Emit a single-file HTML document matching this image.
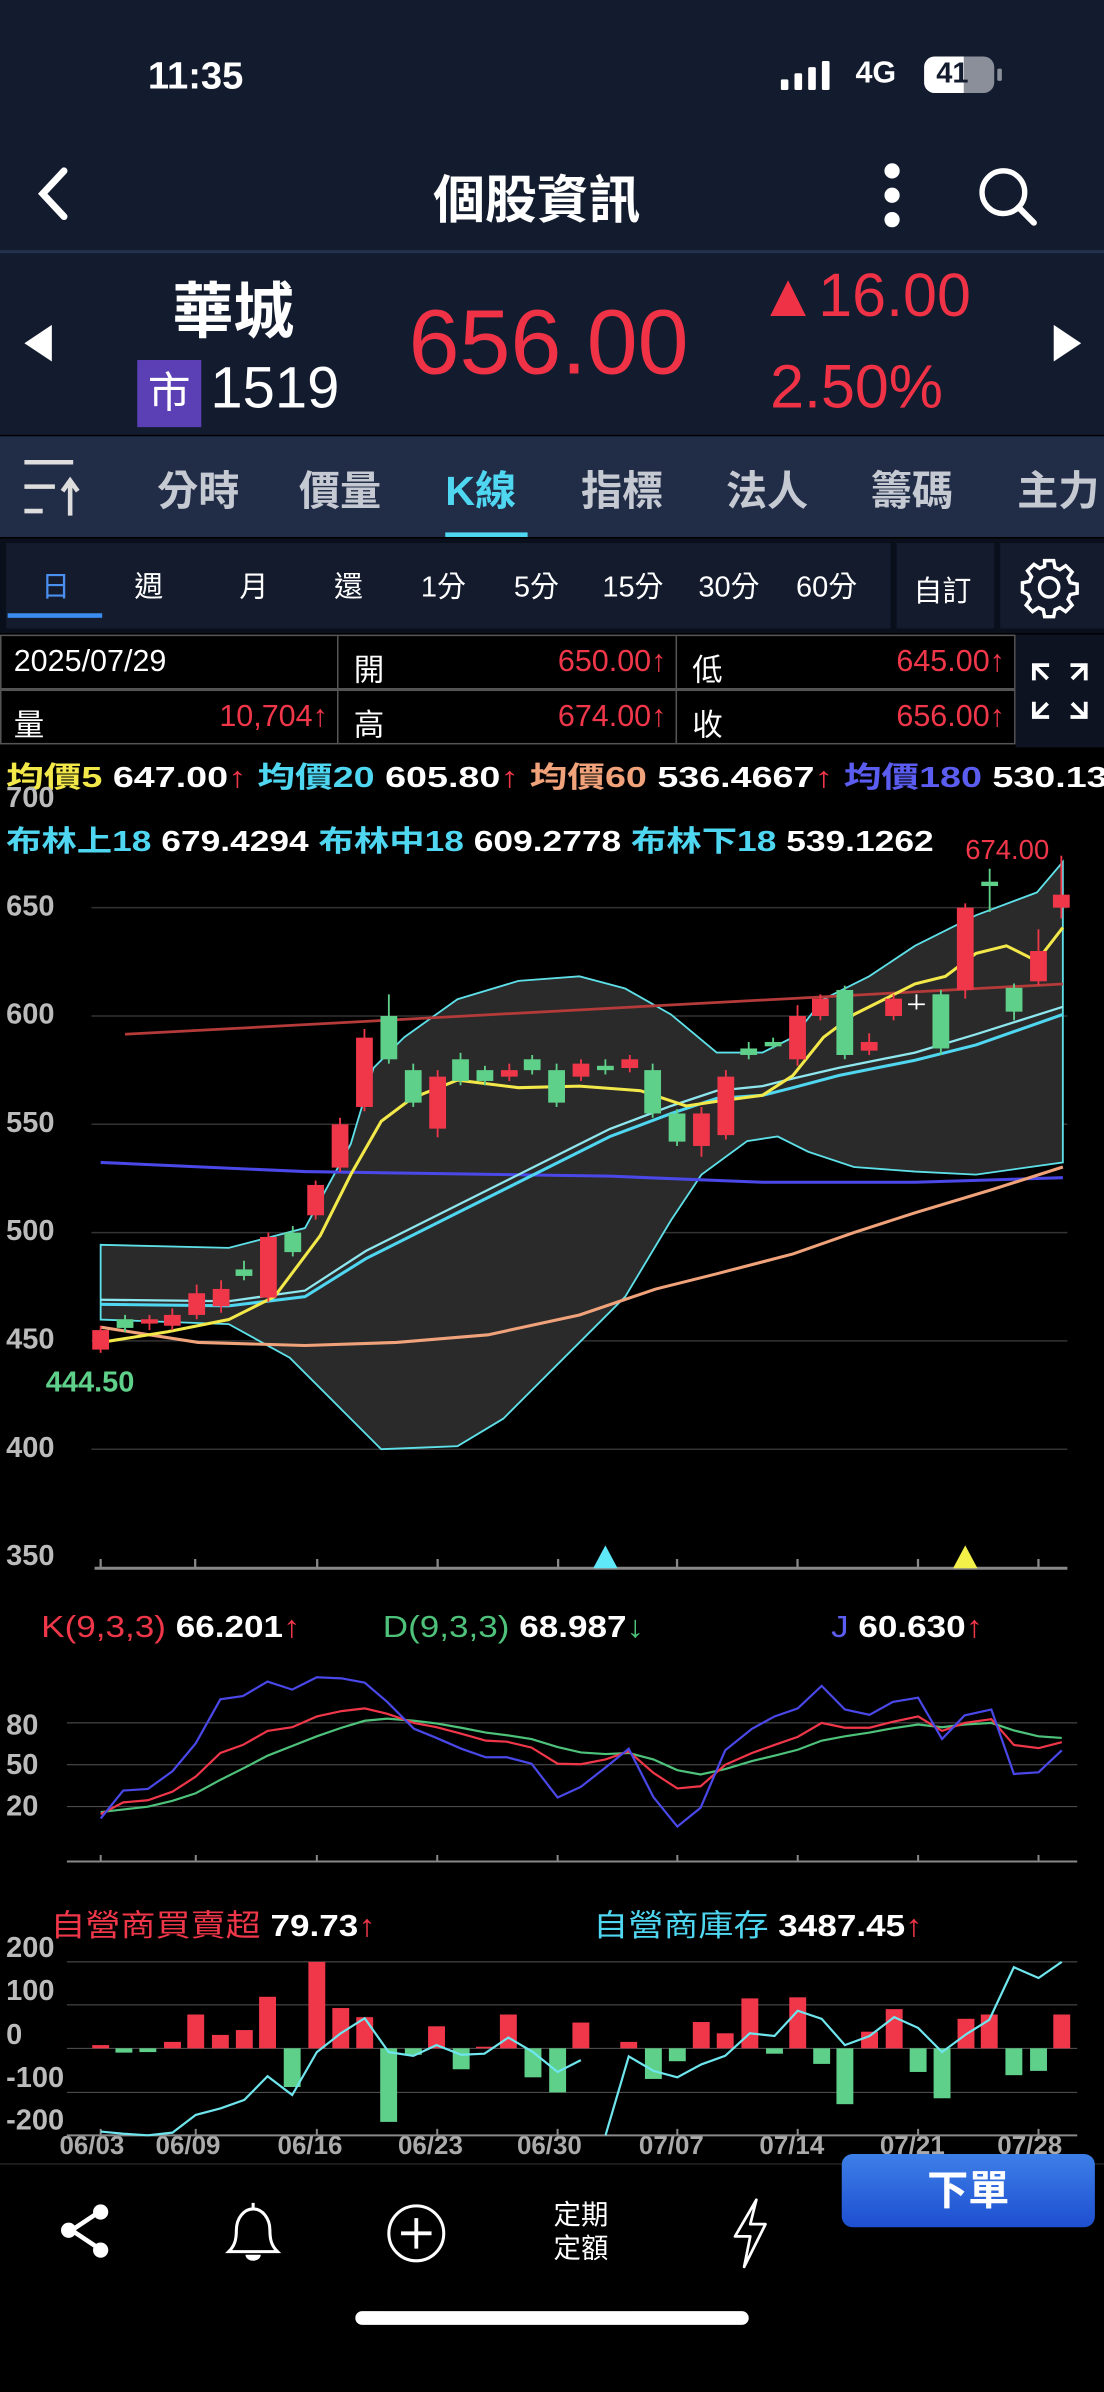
<!DOCTYPE html>
<html><head><meta charset="utf-8"><style>
*{margin:0;padding:0;box-sizing:border-box}
body{width:1104px;height:2392px;background:#000;overflow:hidden;font-family:"Liberation Sans","Noto Sans CJK TC",sans-serif;color:#fff;position:relative}
#w{position:absolute;left:0;top:0;width:724px;height:1568px;transform:scale(1.5249,1.5255);transform-origin:0 0}
.a{position:absolute;white-space:nowrap}
.b{font-weight:bold}
.tab{position:absolute;top:300px;font-size:27px;color:#c5c9d2;font-weight:bold}
.per{position:absolute;top:370px;font-size:19px;color:#fff}
.cell{position:absolute;height:36px;border:1px solid #555;background:#000;font-size:20px}
.red{color:#f0374a}
.yl{font-size:19px;color:#bbb;font-weight:bold;position:absolute;left:4px}
.sx{transform-origin:0 0}
</style></head><body>
<div id="w">
<div class="a" style="left:0;top:0;width:724px;height:285px;background:#131b2e"></div>
<div class="a b" style="left:97px;top:36px;font-size:25px">11:35</div>
<svg class="a" style="left:512px;top:40px" width="40" height="20"><rect x="0" y="12" width="5" height="7" rx="1" fill="#fff"/><rect x="9" y="8" width="5" height="11" rx="1" fill="#fff"/><rect x="18" y="4" width="5" height="15" rx="1" fill="#fff"/><rect x="27" y="0" width="5" height="19" rx="1" fill="#fff"/></svg>
<div class="a b" style="left:561px;top:37px;font-size:20px">4G</div>
<div class="a" style="left:606px;top:37px;width:46px;height:24px;border-radius:7px;background:#8a8f99;overflow:hidden"><div style="width:26px;height:24px;background:#fff"></div><div class="a b" style="left:8px;top:1px;font-size:19px;color:#131b2e">41</div></div>
<div class="a" style="left:654px;top:45px;width:3px;height:8px;background:#8a8f99;border-radius:1px"></div>
<svg class="a" style="left:20px;top:108px" width="28" height="38"><path d="M22 4 L8 19 L22 34" stroke="#fff" stroke-width="4.5" fill="none" stroke-linecap="round"/></svg>
<div class="a b" style="left:284px;top:104px;font-size:34px">個股資訊</div>
<svg class="a" style="left:575px;top:106px" width="20" height="44"><circle cx="10" cy="6" r="5" fill="#fff"/><circle cx="10" cy="22" r="5" fill="#fff"/><circle cx="10" cy="38" r="5" fill="#fff"/></svg>
<svg class="a" style="left:640px;top:108px" width="42" height="42"><circle cx="18" cy="18" r="14" stroke="#fff" stroke-width="3.5" fill="none"/><path d="M28 28 L38 38" stroke="#fff" stroke-width="4" stroke-linecap="round"/></svg>
<div class="a" style="left:0;top:164px;width:724px;height:2px;background:#22324d"></div>
<svg class="a" style="left:14px;top:212px" width="24" height="26"><path d="M20 1 L20 25 L2 13Z" fill="#fff"/></svg>
<svg class="a" style="left:688px;top:212px" width="24" height="26"><path d="M3 1 L3 25 L21 13Z" fill="#fff"/></svg>
<div class="a b" style="left:113px;top:172px;font-size:40px">華城</div>
<div class="a" style="left:90px;top:236px;width:42px;height:44px;background:#5b3fb5;font-size:28px;text-align:center;line-height:44px">市</div>
<div class="a" style="left:138px;top:234px;font-size:38px">1519</div>
<div class="a" style="left:268px;top:190px;font-size:60px;color:#ef3245">656.00</div>
<div class="a" style="left:497px;top:172px;font-size:40px;color:#ef3245">▲16.00</div>
<div class="a" style="left:505px;top:232px;font-size:40px;color:#ef3245">2.50%</div>
<div class="a" style="left:0;top:286px;width:724px;height:66px;background:#212c47"></div>
<svg class="a" style="left:14px;top:300px" width="40" height="40"><path d="M2 3 H34 M2 19 H22 M2 35 H14" stroke="#ddd" stroke-width="3"/><path d="M32 38 V16 M27 22 L32 15 L37 22" stroke="#ddd" stroke-width="3" fill="none"/></svg>
<div class="tab" style="left:103px">分時</div><div class="tab" style="left:196px">價量</div>
<div class="tab" style="left:292px;color:#4fd6f0">K線</div><div class="tab" style="left:381px">指標</div>
<div class="tab" style="left:476px">法人</div><div class="tab" style="left:571px">籌碼</div><div class="tab" style="left:667px">主力</div>
<div class="a" style="left:292px;top:349px;width:54px;height:3px;background:#4fd6f0"></div>
<div class="a" style="left:0;top:353px;width:724px;height:62px;background:#0a0f1c"></div>
<div class="a" style="left:4px;top:356px;width:580px;height:56px;background:#131b2d"></div>
<div class="a" style="left:588px;top:356px;width:64px;height:56px;background:#131b2d"></div>
<div class="a" style="left:656px;top:356px;width:68px;height:56px;background:#131b2d"></div>
<div class="per" style="left:27px;color:#4b8ff0">日</div><div class="per" style="left:88px">週</div><div class="per" style="left:157px">月</div><div class="per" style="left:219px">還</div>
<div class="per" style="left:276px">1分</div><div class="per" style="left:337px">5分</div><div class="per" style="left:395px">15分</div><div class="per" style="left:458px">30分</div><div class="per" style="left:522px">60分</div>
<div class="per" style="left:599px;top:373px">自訂</div>
<div class="a" style="left:5px;top:402px;width:62px;height:3px;background:#3b8cf0"></div>
<svg class="a" style="left:667px;top:364px" width="42" height="42" viewBox="0 0 24 24"><path d="M10.3 2h3.4l.5 2.6 1.8.8 2.2-1.5 2.4 2.4-1.5 2.2.8 1.8 2.6.5v3.4l-2.6.5-.8 1.8 1.5 2.2-2.4 2.4-2.2-1.5-1.8.8-.5 2.6h-3.4l-.5-2.6-1.8-.8-2.2 1.5-2.4-2.4 1.5-2.2-.8-1.8L2 13.7v-3.4l2.6-.5.8-1.8-1.5-2.2 2.4-2.4 2.2 1.5 1.8-.8z" fill="none" stroke="#fff" stroke-width="1.3"/><circle cx="12" cy="12" r="3.6" fill="none" stroke="#fff" stroke-width="1.3"/></svg>
<div class="cell" style="left:0;top:416px;width:222px"><span class="a" style="left:8px;top:6px">2025/07/29</span></div>
<div class="cell" style="left:221px;top:416px;width:223px"><span class="a" style="left:10px;top:6px">開</span><span class="a red" style="right:6px;top:6px">650.00↑</span></div>
<div class="cell" style="left:443px;top:416px;width:223px"><span class="a" style="left:10px;top:6px">低</span><span class="a red" style="right:6px;top:6px">645.00↑</span></div>
<div class="cell" style="left:0;top:452px;width:222px"><span class="a" style="left:8px;top:6px">量</span><span class="a red" style="right:6px;top:6px">10,704↑</span></div>
<div class="cell" style="left:221px;top:452px;width:223px"><span class="a" style="left:10px;top:6px">高</span><span class="a red" style="right:6px;top:6px">674.00↑</span></div>
<div class="cell" style="left:443px;top:452px;width:223px"><span class="a" style="left:10px;top:6px">收</span><span class="a red" style="right:6px;top:6px">656.00↑</span></div>
<div class="a" style="left:666px;top:416px;width:58px;height:74px;background:#0d1320"></div>
<svg class="a" style="left:674px;top:432px" width="42" height="42"><g stroke="#fff" stroke-width="2.5" fill="none"><path d="M4 14V4h10M4 4l9 9"/><path d="M28 4h10v10M38 4l-9 9"/><path d="M4 28v10h10M4 38l9-9"/><path d="M38 28v10H28M38 38l-9-9"/></g></svg>
<div class="a b sx" style="left:4px;top:495px;font-size:19px;transform:scaleX(1.3)"><span style="color:#f3e84a">均價5</span> 647.00<span class="red">↑</span> <span style="color:#4fd6f0">均價20</span> 605.80<span class="red">↑</span> <span style="color:#f0a27a">均價60</span> 536.4667<span class="red">↑</span> <span style="color:#5b5cf0">均價180</span> 530.13</div>
<div class="a b sx" style="left:4px;top:537px;font-size:19px;transform:scaleX(1.22)"><span style="color:#4fd6f0">布林上18</span> 679.4294 <span style="color:#4fd6f0">布林中18</span> 609.2778 <span style="color:#4fd6f0">布林下18</span> 539.1262</div>
<div class="yl" style="top:513px">700</div><div class="yl" style="top:584px">650</div><div class="yl" style="top:655px">600</div><div class="yl" style="top:726px">550</div><div class="yl" style="top:797px">500</div><div class="yl" style="top:868px">450</div><div class="yl" style="top:939px">400</div><div class="yl" style="top:1010px">350</div>
<svg class="a" style="left:0;top:0" width="724" height="1040">
<g stroke="#333" stroke-width="1"><path d="M60 595H700M60 666H700M60 737H700M60 808H700M60 879H700M60 950H700"/></g>
<path d="M66 816L150 818L200 805L230 750L245 700L265 680L300 655L340 643L380 640L410 648L440 665L470 690L500 690L520 680L540 655L570 640L600 620L640 600L680 585L697 565L697 762L640 770L600 768L560 765L530 755L510 745L490 748L460 770L440 800L410 850L370 890L330 930L300 948L250 950L225 925L190 890L150 868L66 865Z" fill="#2a2a2a" stroke="#5ee0e8" stroke-width="1.2"/>
<path d="M82 678L697 645" stroke="#b53a3a" stroke-width="1.8" fill="none"/>
<path d="M66 762L200 768L400 771L500 775L600 775L697 772" stroke="#4a48e8" stroke-width="2" fill="none"/>
<path d="M66 870L130 880L200 882L260 880L320 875L380 862L430 845L470 835L520 822L560 808L600 795L650 780L697 765" stroke="#f0a27a" stroke-width="2" fill="none"/>
<path d="M66 852L150 853L200 846L240 820L300 790L360 760L400 740L440 725L470 715L500 712L520 707L550 700L600 690L640 678L697 660" stroke="#8ee6ee" stroke-width="1.5" fill="none"/>
<path d="M66 855L150 856L200 850L240 825L300 795L360 765L400 745L440 730L470 720L500 718L520 713L550 705L600 695L640 685L697 665" stroke="#4fd6f0" stroke-width="2" fill="none"/>
<path d="M66 880L110 873L150 865L180 850L210 810L230 770L250 735L270 720L300 708L340 713L380 712L420 715L450 725L470 722L500 718L520 705L540 680L560 665L580 655L600 645L620 640L640 625L660 620L680 630L697 608" stroke="#f3e84a" stroke-width="2" fill="none"/>
<g id="c" transform="matrix(1 0 0 -1.42 0 1518)"></g>
<path d="M62 1028H700" stroke="#888" stroke-width="2"/>
<g stroke="#888" stroke-width="1.5"><path d="M66 1022V1028M128 1022V1028M208 1022V1028M287 1022V1028M366 1022V1028M444 1022V1028M523 1022V1028M602 1022V1028M681 1022V1028"/></g>
<path d="M389 1028L397 1013L405 1028Z" fill="#5ee8f8"/><path d="M625 1028L633 1013L641 1028Z" fill="#f3f04a"/>
</svg>
<div class="a" style="left:633px;top:547px;font-size:18px;color:#f0374a">674.00</div>
<div class="a b" style="left:30px;top:896px;font-size:19px;color:#5fd08a">444.50</div>
<div class="a sx" style="left:27px;top:1056px;font-size:20px;transform:scaleX(1.15)"><span class="red">K(9,3,3)</span> <b>66.201</b><span class="red">↑</span></div>
<div class="a sx" style="left:251px;top:1056px;font-size:20px;transform:scaleX(1.15)"><span style="color:#4ec27a">D(9,3,3)</span> <b>68.987</b><span style="color:#4ec27a">↓</span></div>
<div class="a sx" style="left:545px;top:1056px;font-size:20px;transform:scaleX(1.15)"><span style="color:#5b5cf0">J</span> <b>60.630</b><span class="red">↑</span></div>
<div class="yl" style="top:1121px">80</div><div class="yl" style="top:1147px">50</div><div class="yl" style="top:1174px">20</div>
<div class="a sx" style="left:33px;top:1246px;font-size:20px;transform:scaleX(1.15)"><span class="red">自營商買賣超</span> <b>79.73</b><span class="red">↑</span></div>
<div class="a sx" style="left:389px;top:1246px;font-size:20px;transform:scaleX(1.15)"><span style="color:#4fd6f0">自營商庫存</span> <b>3487.45</b><span class="red">↑</span></div>
<div class="yl" style="top:1267px">200</div><div class="yl" style="top:1295px">100</div><div class="yl" style="top:1324px">0</div><div class="yl" style="top:1352px">-100</div><div class="yl" style="top:1380px">-200</div>
<div class="a b" style="left:0;top:1397px;width:724px;font-size:17px;color:#aaa">
<span class="a" style="left:39px">06/03</span><span class="a" style="left:102px">06/09</span><span class="a" style="left:182px">06/16</span><span class="a" style="left:261px">06/23</span><span class="a" style="left:339px">06/30</span><span class="a" style="left:419px">07/07</span><span class="a" style="left:498px">07/14</span><span class="a" style="left:577px">07/21</span><span class="a" style="left:654px">07/28</span></div>
<div class="a" style="left:0;top:1418px;width:724px;height:1px;background:#222"></div>
<svg class="a" style="left:36px;top:1442px" width="40" height="40"><path d="M29 8L11 20L29 32" stroke="#fff" stroke-width="3" fill="none"/><circle cx="30" cy="8" r="5" fill="#fff"/><circle cx="9" cy="20" r="5" fill="#fff"/><circle cx="30" cy="33" r="5" fill="#fff"/></svg>
<svg class="a" style="left:144px;top:1440px" width="44" height="46"><path d="M6 36H38C34 32 33 28 33 22C33 14 28 8 22 8C16 8 11 14 11 22C11 28 10 32 6 36Z" stroke="#fff" stroke-width="2" fill="none"/><path d="M22 4V8" stroke="#fff" stroke-width="2"/><path d="M17 38a5 4 0 0 0 10 0Z" fill="#fff"/></svg>
<svg class="a" style="left:253px;top:1444px" width="40" height="40"><circle cx="20" cy="20" r="18" stroke="#fff" stroke-width="2" fill="none"/><path d="M20 10V30M10 20H30" stroke="#fff" stroke-width="2.5"/></svg>
<div class="a" style="left:363px;top:1441px;font-size:18px;line-height:22px">定期<br>定額</div>
<svg class="a" style="left:478px;top:1440px" width="28" height="48"><path d="M18 2L4 26H14L10 46L24 18H14Z" stroke="#fff" stroke-width="1.8" fill="none" stroke-linejoin="round"/></svg>
<div class="a" style="left:552px;top:1412px;width:166px;height:48px;border-radius:7px;background:linear-gradient(#3d7fe8,#1e4fd0);font-size:27px;font-weight:bold;text-align:center;line-height:48px">下單</div>
<div class="a" style="left:233px;top:1515px;width:258px;height:9px;border-radius:5px;background:#fff"></div>
</div>
<svg style="position:absolute;left:0;top:1550px" width="1104" height="842" viewBox="0 0 1568 1568" preserveAspectRatio="none">
<g stroke="#555" stroke-width="1"><path d="M95 322H1530M95 400H1530M95 478H1530M95 767H1530M95 847H1530M95 928H1530M95 1010H1530" vector-effect="non-scaling-stroke"/></g>
<g stroke="#888" stroke-width="2" fill="none"><path vector-effect="non-scaling-stroke" d="M95 580H1530M95 1090H1530"/><path vector-effect="non-scaling-stroke" d="M143 568V580M278 568V580M450 568V580M621 568V580M792 568V580M962 568V580M1133 568V580M1304 568V580M1475 568V580M143 1078V1090M278 1078V1090M450 1078V1090M621 1078V1090M792 1078V1090M962 1078V1090M1133 1078V1090M1304 1078V1090M1475 1078V1090"/></g>
<g id="bars"></g>
<g fill="none" stroke-width="2.2">
<path vector-effect="non-scaling-stroke" stroke="#4ec27a" d="M143 488L210 478L245 467L278 453L313 428L345 407L380 383L415 365L450 347L485 331L518 318L550 314L588 318L620 323L655 331L690 340L720 345L755 352L792 367L825 377L860 380L893 378L928 390L962 410L995 418L1030 408L1068 393L1100 383L1133 372L1167 355L1200 347L1235 340L1268 332L1304 325L1338 330L1370 325L1408 322L1440 336L1475 347L1508 350"/>
<path vector-effect="non-scaling-stroke" stroke="#f0374a" d="M143 492L175 470L210 466L245 450L278 422L313 378L345 363L380 337L415 330L450 310L485 300L518 295L550 305L588 322L620 330L655 342L690 355L720 357L755 368L792 398L825 399L860 390L893 375L928 415L962 444L995 440L1030 400L1068 378L1100 363L1133 348L1167 322L1200 331L1235 331L1268 320L1304 310L1338 337L1370 322L1408 315L1440 363L1475 369L1508 358"/>
<path vector-effect="non-scaling-stroke" stroke="#4a48e8" d="M143 500L175 448L210 445L245 412L278 360L313 278L345 272L380 245L415 260L450 237L485 239L518 247L550 283L588 333L620 350L655 370L690 386L720 386L755 398L792 461L825 441L860 405L893 370L928 460L962 515L995 480L1030 373L1068 333L1100 310L1133 295L1167 253L1200 297L1235 307L1268 283L1304 275L1338 352L1370 308L1408 297L1440 417L1475 414L1508 373"/>
<path vector-effect="non-scaling-stroke" stroke="#6fe6ee" d="M143 1083L175 1087L210 1090L245 1085L278 1052L313 1040L347 1024L380 980L415 1015L450 935L484 900L518 872L552 935L587 942L620 922L655 940L688 938L722 908L757 935L792 972L825 950"/>
<path vector-effect="non-scaling-stroke" stroke="#6fe6ee" d="M860 1090L893 943L928 970L962 982L996 958L1030 942L1065 900L1100 905L1133 858L1167 873L1200 922L1235 905L1270 870L1304 890L1338 935L1372 902L1405 875L1440 777L1475 797L1508 767"/>
</g>
</svg>
<script>
var C=[[66,446,455,457,444.5],[82,460,456,462,454],[98,458,460,462,455],[113,457,462,465,455],[129,462,472,476,460],[145,466,474,478,463],[160,483,480,487,478],[176,470,498,500,468],[192,500,491,503,489],[207,508,522,524,506],[223,530,550,553,528],[239,558,590,594,556],[255,600,580,610,578],[271,575,560,578,558],[287,548,572,575,544],[302,580,570,583,568],[318,575,570,577,568],[334,572,575,578,570],[349,580,575,582,573],[365,575,560,578,558],[381,572,578,580,570],[397,577,575,580,573],[413,576,580,582,574],[428,575,555,578,553],[444,555,542,557,540],[460,540,555,558,535],[476,545,572,575,543],[491,585,582,588,580],[507,588,586,590,585],[523,580,600,605,577],[538,600,608,610,598],[554,612,582,614,580],[570,584,588,592,582],[586,600,608,610,598],[601,605,605.6,610,603],[617,610,585,612,582],[633,612,650,652,608],[649,662,660,668,648],[665,613,602,615,598],[681,616,630,640,614],[696,650,656,674,645]];
var s='';C.forEach(function(c){var col=c[0]==601?'#fff':(c[2]>c[1]?'#f0374a':'#5fd08a');var lo=Math.min(c[1],c[2]),hi=Math.max(c[1],c[2]);if(hi-lo<0.8)hi=lo+0.8;
s+='<line x1="'+c[0]+'" x2="'+c[0]+'" y1="'+c[4]+'" y2="'+c[3]+'" stroke="'+col+'" stroke-width="1.2" vector-effect="non-scaling-stroke"/><rect x="'+(c[0]-5.5)+'" y="'+lo+'" width="11" height="'+(hi-lo)+'" fill="'+col+'"/>';});
document.getElementById('c').innerHTML=s;
var B=[[143,922],[176,936],[210,935],[245,916],[278,865],[313,903],[347,894],[380,832],[415,1000],[450,767],[484,853],[518,870],[552,1065],[587,940],[620,887],[655,967],[688,925],[722,865],[757,982],[792,1010],[825,880],[893,916],[928,985],[962,952],[996,879],[1030,900],[1065,835],[1100,938],[1133,833],[1167,957],[1200,1032],[1235,897],[1270,855],[1304,972],[1338,1021],[1372,873],[1405,865],[1440,978],[1475,970],[1508,865]];
var t='';B.forEach(function(b){var up=b[1]<928;t+='<rect x="'+(b[0]-12)+'" y="'+(up?b[1]:928)+'" width="24" height="'+Math.abs(b[1]-928)+'" fill="'+(up?'#f0374a':'#5fd08a')+'"/>';});
document.getElementById('bars').innerHTML=t;
</script>
</body></html>
